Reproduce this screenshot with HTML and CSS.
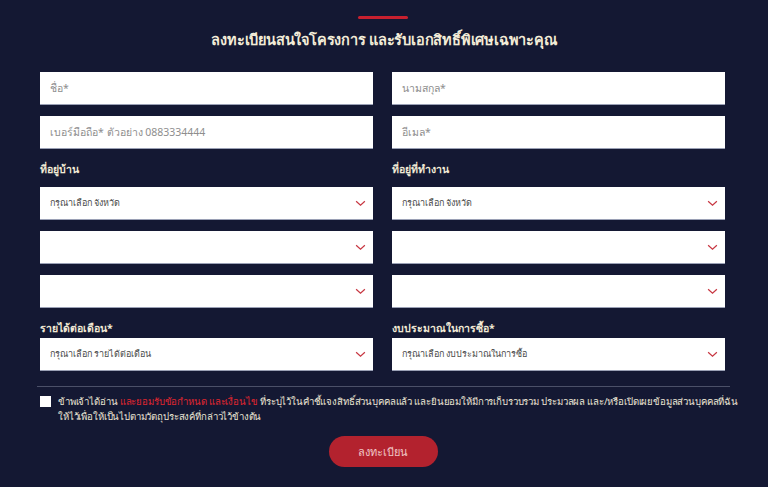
FILE: index.html
```html
<!DOCTYPE html>
<html lang="th">
<head>
<meta charset="utf-8">
<link rel="stylesheet" href="styles.css">
</head>
<body>
<div class="page">
  <div class="accent"></div>
  <h1 class="title">ลงทะเบียนสนใจโครงการ และรับเอกสิทธิ์พิเศษเฉพาะคุณ</h1>
  <form class="form">
    <div class="grid">
      <div class="col">
        <div class="field">ชื่อ*</div>
        <div class="field">เบอร์มือถือ* ตัวอย่าง 0883334444</div>
        <div class="label">ที่อยู่บ้าน</div>
        <div class="select"><span>กรุณาเลือก จังหวัด</span><svg class="chev" viewBox="0 0 12 8"><path d="M1 1.5 L6 6 L11 1.5" /></svg></div>
        <div class="select"><span></span><svg class="chev" viewBox="0 0 12 8"><path d="M1 1.5 L6 6 L11 1.5" /></svg></div>
        <div class="select"><span></span><svg class="chev" viewBox="0 0 12 8"><path d="M1 1.5 L6 6 L11 1.5" /></svg></div>
        <div class="label label2">รายได้ต่อเดือน*</div>
        <div class="select"><span>กรุณาเลือก รายได้ต่อเดือน</span><svg class="chev" viewBox="0 0 12 8"><path d="M1 1.5 L6 6 L11 1.5" /></svg></div>
      </div>
      <div class="col">
        <div class="field">นามสกุล*</div>
        <div class="field">อีเมล*</div>
        <div class="label">ที่อยู่ที่ทำงาน</div>
        <div class="select"><span>กรุณาเลือก จังหวัด</span><svg class="chev" viewBox="0 0 12 8"><path d="M1 1.5 L6 6 L11 1.5" /></svg></div>
        <div class="select"><span></span><svg class="chev" viewBox="0 0 12 8"><path d="M1 1.5 L6 6 L11 1.5" /></svg></div>
        <div class="select"><span></span><svg class="chev" viewBox="0 0 12 8"><path d="M1 1.5 L6 6 L11 1.5" /></svg></div>
        <div class="label label2">งบประมาณในการซื้อ*</div>
        <div class="select"><span>กรุณาเลือก งบประมาณในการซื้อ</span><svg class="chev" viewBox="0 0 12 8"><path d="M1 1.5 L6 6 L11 1.5" /></svg></div>
      </div>
    </div>
    <div class="divider"></div>
    <div class="consent">
      <span class="box"></span>
      <p class="consent-text">ข้าพเจ้าได้อ่าน <span class="link">และยอมรับข้อกำหนด และเงื่อนไข</span> ที่ระบุไว้ในคำชี้แจงสิทธิ์ส่วนบุคคลแล้ว และยินยอมให้มีการเก็บรวบรวม ประมวลผล และ/หรือเปิดเผยข้อมูลส่วนบุคคลที่ฉัน<br>ให้ไว้เพื่อให้เป็นไปตามวัตถุประสงค์ที่กล่าวไว้ข้างต้น</p>
    </div>
    <div class="actions">
      <button type="button" class="submit">ลงทะเบียน</button>
    </div>
  </form>
</div>
</body>
</html>
```
FILE: styles.css
```css
* { box-sizing: border-box; }
html, body {
  margin: 0;
  padding: 0;
  background: #141833;
  height: 100%;
}
body {
  font-family: "Noto Sans", "Liberation Sans", sans-serif;
  color: #f2ead6;
  overflow: hidden;
}
.page {
  width: 768px;
  height: 487px;
  padding-top: 16px;
  display: flex;
  flex-direction: column;
  align-items: center;
}
.accent {
  width: 50px;
  height: 3px;
  border-radius: 2px;
  background: #c8202f;
  margin-left: -2px;
}
.title {
  margin: 9px 0 0;
  font-size: 14.5px;
  line-height: 22px;
  font-weight: 700;
  color: #f3ecd8;
  letter-spacing: -0.2px;
}
.form {
  width: 768px;
  margin-top: 22px;
  display: flex;
  flex-direction: column;
}
.grid {
  margin-left: 40px;
  width: 685px;
  display: grid;
  grid-template-columns: 333px 333px;
  column-gap: 19px;
}
.col {
  display: flex;
  flex-direction: column;
}
.field, .select {
  height: 33px;
  background: #fff;
  border-bottom: 1px solid #9aa0b5;
  color: #8e8e8e;
  font-size: 10.5px;
  padding: 0 10px;
  display: flex;
  align-items: center;
  margin-bottom: 11px;
}
.select {
  justify-content: space-between;
  color: #4a4a4a;
  font-size: 9px;
  padding-right: 7px;
}
.chev {
  width: 11px;
  height: 7px;
  fill: none;
  stroke: #c73641;
  stroke-width: 1.4;
}
.label {
  font-size: 10.5px;
  font-weight: 700;
  color: #f2ead6;
  height: 27px;
  line-height: 14px;
  padding-top: 2px;
}
.label2 {
  height: 19px;
  padding-top: 2px;
}
.divider {
  margin: 4px 0 0 37px;
  width: 693px;
  height: 1px;
  background: #4b5068;
}
.consent {
  margin: 7px 0 0 40px;
  width: 720px;
  display: flex;
  align-items: flex-start;
  gap: 7px;
}
.box {
  flex: none;
  width: 11px;
  height: 11px;
  margin-top: 2px;
  background: #fff;
}
.consent-text {
  margin: 0;
  font-size: 9.6px;
  line-height: 15px;
  color: #ece6d6;
  letter-spacing: -0.15px;
  white-space: nowrap;
}
.link {
  color: #e0262f;
}
.actions {
  display: flex;
  justify-content: center;
  margin-top: 12px;
  padding-right: 2px;
}
.submit {
  width: 109px;
  height: 31px;
  border: 0;
  border-radius: 16px;
  background: #b3222e;
  color: #f0c6c6;
  font-family: inherit;
  font-size: 11px;
}
```
